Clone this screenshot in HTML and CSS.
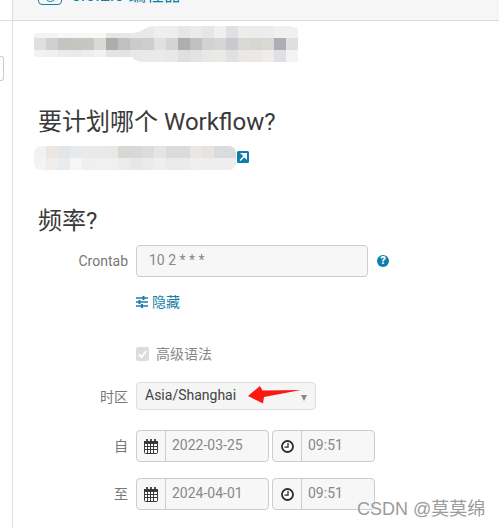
FILE: index.html
```html
<!DOCTYPE html>
<html lang="zh">
<head>
<meta charset="utf-8">
<title>频率</title>
<link rel="stylesheet" href="styles.css">
</head>
<body>
<div class="app">
  <aside class="side">
    <div class="side-top"></div>
    <div class="side-tab"></div>
  </aside>
  <main class="main">
    <header class="bar">
      <div class="bar-inner">
        <span class="bar-icon"><span class="bar-dot"></span></span>
        <span class="bar-title">5.0.2.0 编程器</span>
      </div>
    </header>
    <div class="content">
      <svg class="mosaic mosaic-a" width="264" height="36" viewBox="0 0 264 36">
        <defs><clipPath id="ca"><path d="M0 9Q0 7 4 7H96Q106 7 112 2Q116 0 124 0H250Q258 0 264 3V36H110Q102 36 98 31H4Q0 31 0 29Z"/></clipPath></defs>
        <g clip-path="url(#ca)">
          <rect width="264" height="12" y="0" fill="#f3f3f3"/>
          <rect x="24" width="60" height="12" fill="#f8f7f7"/>
          <rect x="72" width="24" height="12" fill="#e6e6e5"/>
          <rect x="96" width="24" height="12" fill="#e9e9e9"/>
          <rect x="120" width="24" height="12" fill="#eeeeee"/>
          <rect x="144" width="12" height="12" fill="#e6e6e6"/>
          <rect x="156" width="12" height="12" fill="#ebebeb"/>
          <rect x="168" width="12" height="12" fill="#e6e6e6"/>
          <rect x="180" width="12" height="12" fill="#f0f0f0"/>
          <rect x="192" width="12" height="12" fill="#e0e0e2"/>
          <rect x="204" width="36" height="12" fill="#ececec"/>
          <rect x="240" width="24" height="12" fill="#f0f0f0"/>
          <rect x="0" y="12" width="12" height="12" fill="#e0dfde"/>
          <rect x="12" y="12" width="12" height="12" fill="#d0d0d0"/>
          <rect x="24" y="12" width="12" height="12" fill="#c4c5c3"/>
          <rect x="36" y="12" width="12" height="12" fill="#c8c5c1"/>
          <rect x="48" y="12" width="12" height="12" fill="#c5c7c5"/>
          <rect x="60" y="12" width="12" height="12" fill="#dbd8d6"/>
          <rect x="72" y="12" width="12" height="12" fill="#adadad"/>
          <rect x="84" y="12" width="12" height="12" fill="#c0bfc2"/>
          <rect x="96" y="12" width="12" height="12" fill="#cacbca"/>
          <rect x="108" y="12" width="12" height="12" fill="#d0cdcb"/>
          <rect x="120" y="12" width="12" height="12" fill="#dfe1e3"/>
          <rect x="132" y="12" width="12" height="12" fill="#d4d4d2"/>
          <rect x="144" y="12" width="12" height="12" fill="#b0afaf"/>
          <rect x="156" y="12" width="12" height="12" fill="#bfbfc4"/>
          <rect x="168" y="12" width="12" height="12" fill="#d3d2d0"/>
          <rect x="180" y="12" width="12" height="12" fill="#d7d6d4"/>
          <rect x="192" y="12" width="12" height="12" fill="#c9cace"/>
          <rect x="204" y="12" width="12" height="12" fill="#dad7d4"/>
          <rect x="216" y="12" width="12" height="12" fill="#d6d6d4"/>
          <rect x="228" y="12" width="12" height="12" fill="#dbd8d3"/>
          <rect x="240" y="12" width="12" height="12" fill="#adaeb3"/>
          <rect x="252" y="12" width="12" height="12" fill="#dfdfe2"/>
          <rect x="0" y="24" width="12" height="12" fill="#f3f2f1"/>
          <rect x="12" y="24" width="12" height="12" fill="#f0f0f0"/>
          <rect x="24" y="24" width="12" height="12" fill="#eaebea"/>
          <rect x="36" y="24" width="12" height="12" fill="#ebeae9"/>
          <rect x="48" y="24" width="12" height="12" fill="#ededed"/>
          <rect x="60" y="24" width="12" height="12" fill="#f3f2f1"/>
          <rect x="72" y="24" width="12" height="12" fill="#e3e3e3"/>
          <rect x="84" y="24" width="12" height="12" fill="#e4e3e4"/>
          <rect x="96" y="24" width="12" height="12" fill="#e8e8e8"/>
          <rect x="108" y="24" width="12" height="12" fill="#ebe9e8"/>
          <rect x="120" y="24" width="12" height="12" fill="#e8eaeb"/>
          <rect x="132" y="24" width="12" height="12" fill="#e8e8e8"/>
          <rect x="144" y="24" width="12" height="12" fill="#dfdfdf"/>
          <rect x="156" y="24" width="12" height="12" fill="#e3e3e5"/>
          <rect x="168" y="24" width="12" height="12" fill="#e8e8e7"/>
          <rect x="180" y="24" width="12" height="12" fill="#e9e9e8"/>
          <rect x="192" y="24" width="12" height="12" fill="#e0e1e3"/>
          <rect x="204" y="24" width="12" height="12" fill="#e9e8e7"/>
          <rect x="216" y="24" width="12" height="12" fill="#eae9e8"/>
          <rect x="228" y="24" width="12" height="12" fill="#eeedeb"/>
          <rect x="240" y="24" width="12" height="12" fill="#e0e0e3"/>
          <rect x="252" y="24" width="12" height="12" fill="#f3f3f6"/>
        </g>
      </svg>
      <h2 class="heading heading-first">要计划哪个 Workflow?</h2>
      <div class="wf-line">
        <svg class="mosaic mosaic-b" width="202" height="24" viewBox="0 0 202 24">
          <rect x="0" width="12" height="12" fill="#f2f2f2"/>
          <rect x="12" width="12" height="12" fill="#ebe6e2"/>
          <rect x="24" width="12" height="12" fill="#e2e6e9"/>
          <rect x="36" width="12" height="12" fill="#e8e9ea"/>
          <rect x="48" width="12" height="12" fill="#eaeaea"/>
          <rect x="60" width="12" height="12" fill="#e9e9e9"/>
          <rect x="72" width="12" height="12" fill="#e8e8e7"/>
          <rect x="84" width="12" height="12" fill="#d9d7d5"/>
          <rect x="96" width="12" height="12" fill="#d6d8d9"/>
          <rect x="108" width="12" height="12" fill="#dddcdb"/>
          <rect x="120" width="12" height="12" fill="#e6e5e5"/>
          <rect x="132" width="12" height="12" fill="#d9dbdd"/>
          <rect x="144" width="12" height="12" fill="#dcdbd9"/>
          <rect x="156" width="12" height="12" fill="#e8e7e5"/>
          <rect x="168" width="12" height="12" fill="#e6e4e2"/>
          <rect x="180" width="22" height="12" fill="#d9dcde"/>
          <rect x="0" y="12" width="12" height="12" fill="#f3f3f3"/>
          <rect x="12" y="12" width="12" height="12" fill="#efecea"/>
          <rect x="24" y="12" width="12" height="12" fill="#e9ecee"/>
          <rect x="36" y="12" width="12" height="12" fill="#f6f6f6"/>
          <rect x="48" y="12" width="12" height="12" fill="#efefef"/>
          <rect x="60" y="12" width="12" height="12" fill="#f0f0f0"/>
          <rect x="72" y="12" width="12" height="12" fill="#f0f0ee"/>
          <rect x="84" y="12" width="12" height="12" fill="#edecea"/>
          <rect x="96" y="12" width="12" height="12" fill="#e5e7e8"/>
          <rect x="108" y="12" width="12" height="12" fill="#ebebeb"/>
          <rect x="120" y="12" width="12" height="12" fill="#efefef"/>
          <rect x="132" y="12" width="12" height="12" fill="#e9eaeb"/>
          <rect x="144" y="12" width="12" height="12" fill="#ebebeb"/>
          <rect x="156" y="12" width="12" height="12" fill="#f0efee"/>
          <rect x="168" y="12" width="12" height="12" fill="#efeeed"/>
          <rect x="180" y="12" width="22" height="12" fill="#eeeeee"/>
        </svg>
        <svg class="ext-icon" width="12" height="12" viewBox="0 0 12 12">
          <rect width="12" height="12" rx="1.5" fill="#0d7fad"/>
          <path d="M3 9.5 7 5.5M5 2.8H9.2V7Z" stroke="#fff" stroke-width="1.6" fill="#fff"/>
        </svg>
      </div>
      <h2 class="heading heading-second">频率?</h2>
      <form class="form">
        <label class="form-label row-cron">Crontab</label>
        <div class="control row-cron cron-control">
          <div class="field cron-field">10 2 * * *</div>
          <span class="help">?</span>
        </div>
        <div class="control row-link">
          <a class="toggle">
            <svg width="12" height="12" viewBox="0 0 12 12">
              <path d="M0 2H12M0 6H12M0 10H12" stroke="#1a7fa8" stroke-width="1.5"/>
              <path d="M7.500 0V4M3.500 4V8M6 8V12" stroke="#1a7fa8" stroke-width="2"/>
            </svg>
            隐藏
          </a>
        </div>
        <div class="control row-check">
          <span class="check">
            <svg width="13" height="14" viewBox="0 0 13 14"><path d="M3 7.500 5.500 10 10.200 4" stroke="#fff" stroke-width="2" fill="none"/></svg>
          </span>
          <span class="check-text">高级语法</span>
        </div>
        <label class="form-label row-zone">时区</label>
        <div class="control row-zone">
          <div class="select">Asia/Shanghai<span class="caret"></span></div>
          <svg class="arrow" width="54" height="18" viewBox="0 0 54 18"><polygon points="0,10 12,0 14.500,4.500 53,4 16,11 15,17.500" fill="#fb1a10"/></svg>
        </div>
        <label class="form-label row-from date-label">自</label>
        <div class="control row-from datetime">
          <div class="group date-group">
            <span class="addon"><svg width="14" height="15" viewBox="0 0 14 15"><use href="#cal"/></svg></span>
            <span class="value">2022-03-25</span>
          </div>
          <div class="group time-group">
            <span class="addon"><svg width="13" height="13" viewBox="0 0 13 13"><use href="#clk"/></svg></span>
            <span class="value">09:51</span>
          </div>
        </div>
        <label class="form-label row-to date-label">至</label>
        <div class="control row-to datetime">
          <div class="group date-group">
            <span class="addon"><svg width="14" height="15" viewBox="0 0 14 15"><use href="#cal"/></svg></span>
            <span class="value">2024-04-01</span>
          </div>
          <div class="group time-group">
            <span class="addon"><svg width="13" height="13" viewBox="0 0 13 13"><use href="#clk"/></svg></span>
            <span class="value">09:51</span>
          </div>
        </div>
      </form>
    </div>
  </main>
</div>
<div class="watermark">CSDN @莫莫绵</div>
<svg class="defs" width="0" height="0">
  <defs>
    <g id="cal">
      <rect x=".5" y="2.500" width="13" height="12" rx="1" fill="#fff" stroke="#3a3a3a"/>
      <rect x="0" y="2" width="14" height="3" fill="#3a3a3a"/>
      <path d="M3 0V4M11 0V4M7 0V4" stroke="#3a3a3a" stroke-width="1.8"/>
      <path d="M3.500 5V14M6.500 5V14M9.500 5V14M1 7.500H13M1 10.500H13" stroke="#3a3a3a" stroke-width="1"/>
    </g>
    <g id="clk">
      <circle cx="6.500" cy="6.500" r="5.500" fill="#fff" stroke="#2b2b2b" stroke-width="1.800"/>
      <path d="M7 3V7.200H3.500" fill="none" stroke="#2b2b2b" stroke-width="1.300"/>
    </g>
  </defs>
</svg>
</body>
</html>
```
FILE: styles.css
```css
* { box-sizing: border-box; }
html, body {
  margin: 0;
  height: 528px;
  overflow: hidden;
  background: #fff;
  font-family: Roboto, "Noto Sans CJK SC", sans-serif;
  font-size: 14px;
  color: #777;
}
.app { display: flex; height: 528px; }
.side {
  width: 13px;
  flex: none;
  border-right: 1px solid #ddd;
}
.side-top { height: 21px; border-bottom: 1px solid #ddd; margin-right: -1px; }
.side-tab {
  width: 4px;
  height: 25px;
  margin-top: 35px;
  border: 1px solid #ccc;
  border-left: 0;
  border-radius: 0 3px 3px 0;
}
.main { flex: 1; min-width: 0; }
.bar {
  height: 21px;
  background: #f6f6f6;
  border-bottom: 1px solid #ddd;
  overflow: hidden;
  padding-left: 25px;
}
.bar-inner {
  display: flex;
  align-items: flex-start;
  height: 26px;
  margin-top: -21px;
  color: #0f7ea8;
  font-size: 17.5px;
  gap: 9px;
}
.bar-title { line-height: 26px; white-space: nowrap; margin-top: 3px; }
.bar-icon {
  width: 24px;
  height: 26px;
  flex: none;
  border: 1.5px solid #1a7fa8;
  border-radius: 4px;
  display: flex;
  align-items: flex-end;
  justify-content: center;
  padding-bottom: 2px;
}
.bar-dot {
  width: 11px;
  height: 11px;
  border: 1.5px solid #1a7fa8;
  border-radius: 50%;
}
.content { padding: 5px 0 0 25px; }
.mosaic { display: block; }
.mosaic-a { margin-left: -4px; }
.heading {
  margin: 0;
  font-size: 24px;
  line-height: 34px;
  font-weight: 400;
  color: #3a3a3a;
}
.heading-first { margin-top: 43px; }
.heading-second { margin-top: 34px; }
.wf-line {
  display: flex;
  align-items: flex-start;
  margin: 7px 0 0 -4px;
  height: 24px;
}
.mosaic-b { border-radius: 7px; }
.ext-icon { margin: 5px 0 0 1px; }
.form {
  display: grid;
  grid-template-columns: 90px 1fr;
  column-gap: 8px;
  margin-top: 7px;
}
.form-label {
  grid-column: 1;
  text-align: right;
  align-self: center;
  color: #777;
}
.date-label { padding-bottom: 3px; }
.control { grid-column: 2; }
.row-cron { margin-top: 0; }
.cron-control { display: flex; align-items: center; gap: 9px; }
.field {
  width: 232px;
  height: 32px;
  line-height: 28px;
  padding-left: 12px;
  background: #f7f7f7;
  border: 1px solid #ccc;
  border-radius: 4px;
  color: #888;
}
.help {
  width: 12px;
  height: 12px;
  border-radius: 50%;
  background: #0d7fad;
  color: #fff;
  font-size: 11px;
  font-weight: 900;
  line-height: 12px;
  text-align: center;
}
.row-link { margin-top: 15px; height: 20px; }
.toggle {
  display: flex;
  align-items: center;
  gap: 4px;
  line-height: 20px;
  color: #1a7fa8;
}
.row-check {
  margin-top: 32px;
  height: 20px;
  display: flex;
  align-items: center;
  gap: 7px;
}
.check {
  width: 13px;
  height: 14px;
  background: #dcdcdc;
  border-radius: 2px;
  display: block;
}
.check svg { display: block; }
.check-text { color: #888; padding-bottom: 3px; }
.row-zone { margin-top: 18px; }
.select {
  width: 180px;
  height: 28px;
  padding: 0 0 2px 8px;
  background: #f5f5f5;
  border: 1px solid #ddd;
  border-radius: 4px;
  color: #444;
  display: flex;
  align-items: center;
  position: relative;
}
.caret {
  position: absolute;
  right: 8px;
  top: 12px;
  border-top: 6px solid #888;
  border-left: 3.5px solid transparent;
  border-right: 3.5px solid transparent;
}
.row-zone.control { position: relative; }
.arrow { position: absolute; left: 112px; top: 4px; }
.datetime { display: flex; gap: 3px; }
.row-from { margin-top: 20px; }
.row-to { margin-top: 16px; }
.group {
  height: 32px;
  display: flex;
  align-items: center;
  background: #f7f7f7;
  border: 1px solid #ccc;
  border-radius: 4px;
}
.date-group { width: 133px; }
.time-group { width: 103px; }
.addon {
  width: 29px;
  height: 100%;
  flex: none;
  display: flex;
  align-items: center;
  justify-content: center;
  border-right: 1px solid #ccc;
}
.addon svg { display: block; }
.value { padding: 0 0 2px 6px; color: #888; }
.watermark {
  position: absolute;
  left: 357px;
  top: 497px;
  font-family: "Liberation Sans", "Noto Sans CJK SC", sans-serif;
  font-size: 18px;
  line-height: 24px;
  color: #9b9b9b;
  white-space: nowrap;
  text-shadow: 0 0 2px #fff;
}
.defs { position: absolute; }
```
